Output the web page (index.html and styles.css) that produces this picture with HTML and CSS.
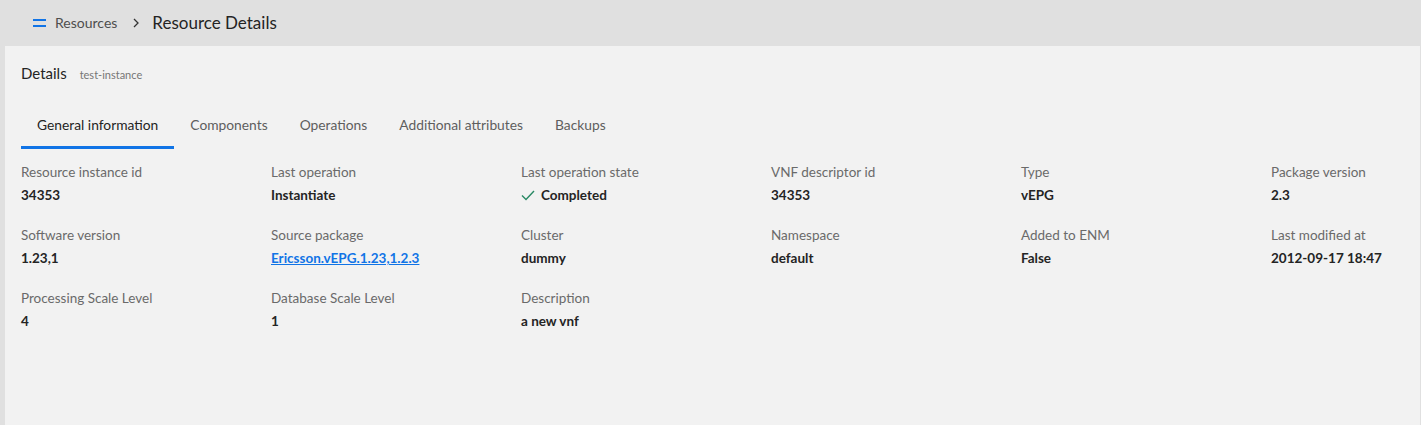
FILE: index.html
```html
<!DOCTYPE html>
<html>
<head>
<meta charset="utf-8">
<link rel="stylesheet" href="styles.css">
</head>
<body>
<div class="topbar">
  <svg class="menu" width="13" height="9" viewBox="0 0 13 9"><rect x="0" y="0" width="13" height="2" fill="#1174e6"/><rect x="0" y="6" width="13" height="2" fill="#1174e6"/></svg>
  <span class="crumb">Resources</span>
  <svg class="chev" width="8" height="10" viewBox="0 0 8 10"><path d="M2 1 L6 5 L2 9" fill="none" stroke="#333" stroke-width="1.3"/></svg>
  <span class="title">Resource Details</span>
</div>
<div class="panel">
  <div class="header"><span class="h">Details</span><span class="sub">test-instance</span></div>
  <div class="tabs">
    <div class="tab active">General information</div>
    <div class="tab">Components</div>
    <div class="tab">Operations</div>
    <div class="tab">Additional attributes</div>
    <div class="tab">Backups</div>
  </div>
  <div class="grid">
    <div class="item"><div class="label">Resource instance id</div><div class="value">34353</div></div>
    <div class="item"><div class="label">Last operation</div><div class="value">Instantiate</div></div>
    <div class="item"><div class="label">Last operation state</div><div class="value"><svg class="check" width="14" height="11" viewBox="0 0 14 11"><path d="M1 5.5 L5 9.5 L13 1" fill="none" stroke="#288964" stroke-width="1.4"/></svg>Completed</div></div>
    <div class="item"><div class="label">VNF descriptor id</div><div class="value">34353</div></div>
    <div class="item"><div class="label">Type</div><div class="value">vEPG</div></div>
    <div class="item"><div class="label">Package version</div><div class="value">2.3</div></div>
    <div class="item"><div class="label">Software version</div><div class="value">1.23,1</div></div>
    <div class="item"><div class="label">Source package</div><div class="value"><a href="#">Ericsson.vEPG.1.23,1.2.3</a></div></div>
    <div class="item"><div class="label">Cluster</div><div class="value">dummy</div></div>
    <div class="item"><div class="label">Namespace</div><div class="value">default</div></div>
    <div class="item"><div class="label">Added to ENM</div><div class="value">False</div></div>
    <div class="item"><div class="label">Last modified at</div><div class="value">2012-09-17 18:47</div></div>
    <div class="item"><div class="label">Processing Scale Level</div><div class="value">4</div></div>
    <div class="item"><div class="label">Database Scale Level</div><div class="value">1</div></div>
    <div class="item"><div class="label">Description</div><div class="value">a new vnf</div></div>
  </div>
</div>
</body>
</html>
```
FILE: styles.css
```css
html, body {
  margin: 0;
  padding: 0;
  background: #e0e0e0;
  font-family: "Lato", "Liberation Sans", sans-serif;
  color: #242424;
}
.topbar {
  height: 46px;
  display: flex;
  align-items: center;
  padding-left: 33px;
  padding-bottom: 1px;
  box-sizing: border-box;
}
.menu { margin-right: 9px; margin-top: 1px; }
.crumb { font-size: 14px; color: #4e4e4e; }
.chev { margin: 0 12px 0 15px; }
.title { font-size: 17px; color: #242424; }
.panel {
  margin-left: 5px;
  margin-right: 1px;
  background: #f2f2f2;
  height: 379px;
  padding: 0 16px;
  box-sizing: border-box;
}
.header {
  display: flex;
  align-items: baseline;
  padding-top: 18px;
  height: 56px;
  box-sizing: border-box;
}
.h { font-size: 15px; color: #242424; }
.sub { font-size: 11px; color: #767676; margin-left: 13px; }
.tabs {
  display: flex;
  height: 48px;
}
.tab {
  padding: 0 16px;
  height: 47px;
  line-height: 45px;
  box-sizing: border-box;
  font-size: 13.8px;
  color: #5e5e5e;
  border-bottom: 3px solid transparent;
}
.tab.active {
  color: #242424;
  border-bottom-color: #1174e6;
}
.grid {
  display: grid;
  grid-template-columns: repeat(5, 250px) 1fr;
  padding-top: 13px;
}
.item { height: 63px; }
.label { font-size: 13.5px; color: #6a6a6a; line-height: 18px; }
.value {
  font-size: 13.5px;
  font-weight: bold;
  color: #242424;
  line-height: 18px;
  margin-top: 5px;
  display: flex;
  align-items: center;
}
.check { margin-right: 6px; }
.value a { color: #1174e6; text-decoration: underline; }
```
